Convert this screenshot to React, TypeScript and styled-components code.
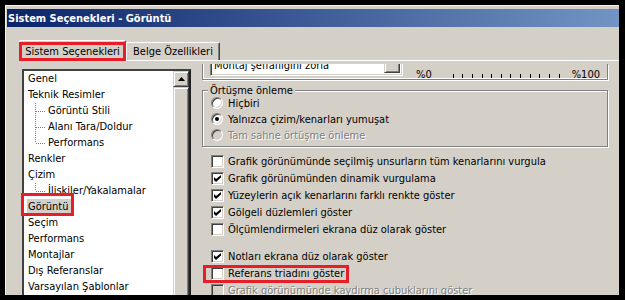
import React from "react";
import styled, { createGlobalStyle, css } from "styled-components";

const face = `"DejaVu Sans Condensed", "DejaVu Sans", Tahoma, sans-serif`;

const GlobalStyle = createGlobalStyle`
  html, body {
    margin: 0;
    padding: 0;
    background: #000;
  }
`;

interface TreeNode {
  label: string;
  child?: boolean;
  last?: boolean;
  selected?: boolean;
}

interface CheckOption {
  label: string;
  checked?: boolean;
  disabled?: boolean;
  gap?: boolean;
  marked?: boolean;
}

const treeNodes: TreeNode[] = [
  { label: "Genel" },
  { label: "Teknik Resimler" },
  { label: "Görüntü Stili", child: true },
  { label: "Alanı Tara/Doldur", child: true },
  { label: "Performans", child: true, last: true },
  { label: "Renkler" },
  { label: "Çizim" },
  { label: "İlişkiler/Yakalamalar", child: true, last: true },
  { label: "Görüntü", selected: true },
  { label: "Seçim" },
  { label: "Performans" },
  { label: "Montajlar" },
  { label: "Dış Referanslar" },
  { label: "Varsayılan Şablonlar" }
];

const radios = [
  { label: "Hiçbiri" },
  { label: "Yalnızca çizim/kenarları yumuşat", checked: true },
  { label: "Tam sahne örtüşme önleme", disabled: true }
];

const checks: CheckOption[] = [
  { label: "Grafik görünümünde seçilmiş unsurların tüm kenarlarını vurgula" },
  { label: "Grafik görünümünden dinamik vurgulama", checked: true },
  { label: "Yüzeylerin açık kenarlarını farklı renkte göster", checked: true },
  { label: "Gölgeli düzlemleri göster", checked: true },
  { label: "Ölçümlendirmeleri ekrana düz olarak göster" },
  { label: "Notları ekrana düz olarak göster", checked: true, gap: true },
  { label: "Referans triadını göster", marked: true },
  { label: "Grafik görünümünde kaydırma çubuklarını göster", disabled: true }
];

//red hand-drawn markers from the screenshot
const redMark = (top: number, right: number, bottom: number, left: number) => css`
  position: relative;
  &::after {
    content: "";
    position: absolute;
    top: ${top}px;
    right: ${right}px;
    bottom: ${bottom}px;
    left: ${left}px;
    border: 3px solid #e61e28;
    pointer-events: none;
  }
`;

const Tree: React.FC = () => (
  <TreeBox>
    <TreeList>
      {treeNodes.map((n, i) => (
        <TreeRow key={i}>
          {n.child && (
            <svg width="18" height="16" viewBox="0 0 18 16">
              <line
                x1="7.5"
                y1="0"
                x2="7.5"
                y2={n.last ? 8 : 16}
                stroke="#808080"
                strokeDasharray="1 1"
              />
              <line
                x1="8"
                y1="8.5"
                x2="17"
                y2="8.5"
                stroke="#808080"
                strokeDasharray="1 1"
              />
            </svg>
          )}
          <TreeLabel $child={n.child} $selected={n.selected}>
            {n.label}
          </TreeLabel>
        </TreeRow>
      ))}
    </TreeList>
    <ScrollBar>
      <ScrollButton>
        <svg width="7" height="4" viewBox="0 0 7 4">
          <path d="M3.5 0 L7 4 L0 4 Z" fill="#000" />
        </svg>
      </ScrollButton>
      <ScrollThumb />
    </ScrollBar>
  </TreeBox>
);

const CheckRow: React.FC<{ option: CheckOption }> = ({ option }) => (
  <OptionRow
    $gap={option.gap}
    $disabled={option.disabled}
    $marked={option.marked}
  >
    <CheckBox $disabled={option.disabled}>
      {option.checked && (
        <svg width="7" height="7" viewBox="0 0 7 7">
          <path d="M0 2 L2 4 L7 0 L7 2.5 L2 7 L0 5 Z" fill="#000" />
        </svg>
      )}
    </CheckBox>
    <span>{option.label}</span>
  </OptionRow>
);

const App: React.FC = () => {
  const ticks = Array.from({ length: 12 });
  return (
    <>
      <GlobalStyle />
      <Screen>
        <Window>
          <TitleBar>Sistem Seçenekleri - Görüntü</TitleBar>
          <Body>
            <TabStrip>
              <Tab $active $width={107}>
                Sistem Seçenekleri
              </Tab>
              <Tab $width={94}>Belge Özellikleri</Tab>
            </TabStrip>
            <Panel>
              <Tree />
              <Options>
                <TopGroup>
                  <Combo>
                    <ComboText>Montaj şeffaflığını zorla</ComboText>
                    <ComboButton />
                  </Combo>
                  <Scale>
                    <ScaleLabel>%0</ScaleLabel>
                    <Ticks>
                      {ticks.map((_, i) => (
                        <Tick key={i} />
                      ))}
                    </Ticks>
                    <ScaleLabel>%100</ScaleLabel>
                  </Scale>
                </TopGroup>
                <GroupBox>
                  <Legend>Örtüşme önleme</Legend>
                  {radios.map((r, i) => (
                    <OptionRow key={i} $disabled={r.disabled} $radio>
                      <RadioCircle $disabled={r.disabled}>
                        {r.checked && <RadioDot />}
                      </RadioCircle>
                      <span>{r.label}</span>
                    </OptionRow>
                  ))}
                </GroupBox>
                <CheckList>
                  {checks.map((c, i) => (
                    <CheckRow key={i} option={c} />
                  ))}
                </CheckList>
              </Options>
            </Panel>
          </Body>
        </Window>
      </Screen>
    </>
  );
};

const raised = css`
  background: #d4d0c8;
  border: 1px solid;
  border-color: #d4d0c8 #404040 #404040 #d4d0c8;
  box-shadow: inset 1px 1px 0 #fff, inset -1px -1px 0 #808080;
`;

const sunken = css`
  border: 1px solid;
  border-color: #808080 #fff #fff #808080;
  box-shadow: inset 1px 1px 0 #404040, inset -1px -1px 0 #d4d0c8;
`;

const Screen = styled.div`
  width: 625px;
  height: 300px;
  box-sizing: border-box;
  padding: 5px 6px 5px 5px;
  background: #000;
  overflow: hidden;
  display: flex;
`;

const Window = styled.div`
  flex: 1;
  min-width: 0;
  display: flex;
  flex-direction: column;
  background: #d4d0c8;
  border-top: 1px solid #f4f3f0;
  border-left: 1px solid #f4f3f0;
  padding: 3px 0 0 1px;
  overflow: hidden;
  font-family: ${face};
  font-size: 11px;
  color: #000;
`;

const TitleBar = styled.div`
  flex: none;
  height: 18px;
  display: flex;
  align-items: center;
  padding-left: 1px;
  background: linear-gradient(to right, #0a246a, #7294c4);
  color: #fff;
  font-weight: bold;
  font-size: 11px;
  white-space: nowrap;
`;

const Body = styled.div`
  flex: 1;
  min-height: 0;
  display: flex;
  flex-direction: column;
  padding: 13px 0 0 12px;
`;

const TabStrip = styled.div`
  flex: none;
  display: flex;
  align-items: flex-end;
  height: 20px;
  position: relative;
  z-index: 1;
`;

const Tab = styled.div<{ $active?: boolean; $width: number }>`
  box-sizing: border-box;
  width: ${(p) => p.$width}px;
  height: ${(p) => (p.$active ? 21 : 18)}px;
  margin-bottom: ${(p) => (p.$active ? -1 : 0)}px;
  display: flex;
  align-items: center;
  justify-content: center;
  background: #d4d0c8;
  border: 1px solid;
  border-bottom: none;
  border-color: #fff #404040 transparent #fff;
  box-shadow: inset -1px 0 0 #808080;
  border-radius: 2px 2px 0 0;
  white-space: nowrap;
  ${(p) => p.$active && redMark(1, -1, 0, -1)}
`;

const Panel = styled.div`
  flex: 1;
  min-height: 0;
  display: flex;
  border-top: 1px solid #fff;
  padding: 3px 0 0 3px;
  overflow: hidden;
`;

const TreeBox = styled.div`
  flex: none;
  width: 169px;
  height: 260px;
  margin: 5px 11px 0 0;
  box-sizing: border-box;
  border: 2px solid;
  border-color: #404040 #202020 #202020 #404040;
  background: #fff;
  display: flex;
`;

const TreeList = styled.div`
  flex: 1;
  min-width: 0;
  padding-left: 4px;
  display: flex;
  flex-direction: column;
`;

const TreeRow = styled.div`
  height: 16px;
  display: flex;
  align-items: center;
  white-space: nowrap;
`;

const TreeLabel = styled.span<{ $child?: boolean; $selected?: boolean }>`
  margin-left: ${(p) => (p.$child ? 2 : 0)}px;
  line-height: 16px;
  ${(p) =>
    p.$selected &&
    css`
      background: #d4d0c8;
      margin-left: -1px;
      padding: 0 2px 0 1px;
      ${redMark(-6, -3, -1, -6)}
    `}
`;

const ScrollBar = styled.div`
  flex: none;
  width: 16px;
  display: flex;
  flex-direction: column;
`;

const ScrollButton = styled.div`
  ${raised};
  box-sizing: border-box;
  height: 16px;
  display: flex;
  align-items: center;
  justify-content: center;
`;

const ScrollThumb = styled.div`
  ${raised};
  flex: 1;
`;

const Options = styled.div`
  flex: 1;
  min-width: 0;
  display: flex;
  flex-direction: column;
  padding-right: 11px;
  overflow: hidden;
  white-space: nowrap;
`;

const TopGroup = styled.div`
  flex: none;
  height: 16px;
  box-sizing: border-box;
  display: flex;
  align-items: flex-end;
  border: 1px solid #808080;
  border-top: none;
  box-shadow: 1px 1px 0 #fff, inset 1px -1px 0 #fff;
  padding-left: 7px;
`;

const Combo = styled.div`
  ${sunken};
  flex: none;
  width: 193px;
  height: 21px;
  box-sizing: border-box;
  margin-bottom: 3px;
  background: #fff;
  display: flex;
  align-items: center;
  padding: 2px 2px 2px 3px;
`;

const ComboText = styled.span`
  flex: 1;
  overflow: hidden;
`;

const ComboButton = styled.span`
  ${raised};
  box-sizing: border-box;
  width: 16px;
  height: 17px;
  align-self: flex-end;
`;

const Scale = styled.div`
  flex: none;
  height: 13px;
  display: flex;
  align-items: center;
  margin: 0 0 -2px 13px;
`;

const ScaleLabel = styled.span`
  line-height: 13px;
`;

const Ticks = styled.div`
  width: 107px;
  height: 100%;
  margin: 0 12px 0 21px;
  display: flex;
  justify-content: space-between;
  align-items: flex-end;
`;

const Tick = styled.span`
  width: 1px;
  height: 4px;
  margin-bottom: 3px;
  background: #000;
`;

const GroupBox = styled.div`
  flex: none;
  margin-top: 10px;
  border: 1px solid #808080;
  box-shadow: 1px 1px 0 #fff, inset 1px 1px 0 #fff;
  display: flex;
  flex-direction: column;
  padding: 0 0 3px 8px;
`;

const Legend = styled.span`
  align-self: flex-start;
  margin: -6px 0 -2px -3px;
  padding: 0 2px;
  line-height: 12px;
  background: #d4d0c8;
`;

const CheckList = styled.div`
  flex: none;
  margin-top: 6px;
  padding-left: 9px;
  display: flex;
  flex-direction: column;
  align-items: flex-start;
`;

const OptionRow = styled.div<{
  $gap?: boolean;
  $disabled?: boolean;
  $marked?: boolean;
  $radio?: boolean;
}>`
  display: flex;
  align-items: center;
  height: ${(p) => (p.$radio ? 16 : 17)}px;
  gap: ${(p) => (p.$radio ? 5 : 4)}px;
  margin-top: ${(p) => (p.$gap ? 10 : 0)}px;
  color: ${(p) => (p.$disabled ? "#808080" : "#000")};
  text-shadow: ${(p) => (p.$disabled ? "1px 1px 0 #fff" : "none")};
  ${(p) => p.$marked && redMark(0, -5, -1, -8)}
`;

const CheckBox = styled.span<{ $disabled?: boolean }>`
  ${sunken};
  flex: none;
  width: 13px;
  height: 13px;
  box-sizing: border-box;
  background: ${(p) => (p.$disabled ? "#d4d0c8" : "#fff")};
  display: flex;
  align-items: center;
  justify-content: center;
`;

const RadioCircle = styled.span<{ $disabled?: boolean }>`
  ${sunken};
  flex: none;
  width: 12px;
  height: 12px;
  box-sizing: border-box;
  border-radius: 50%;
  background: ${(p) => (p.$disabled ? "#d4d0c8" : "#fff")};
  display: flex;
  align-items: center;
  justify-content: center;
`;

const RadioDot = styled.span`
  width: 4px;
  height: 4px;
  border-radius: 50%;
  background: #000;
`;

export default App;
